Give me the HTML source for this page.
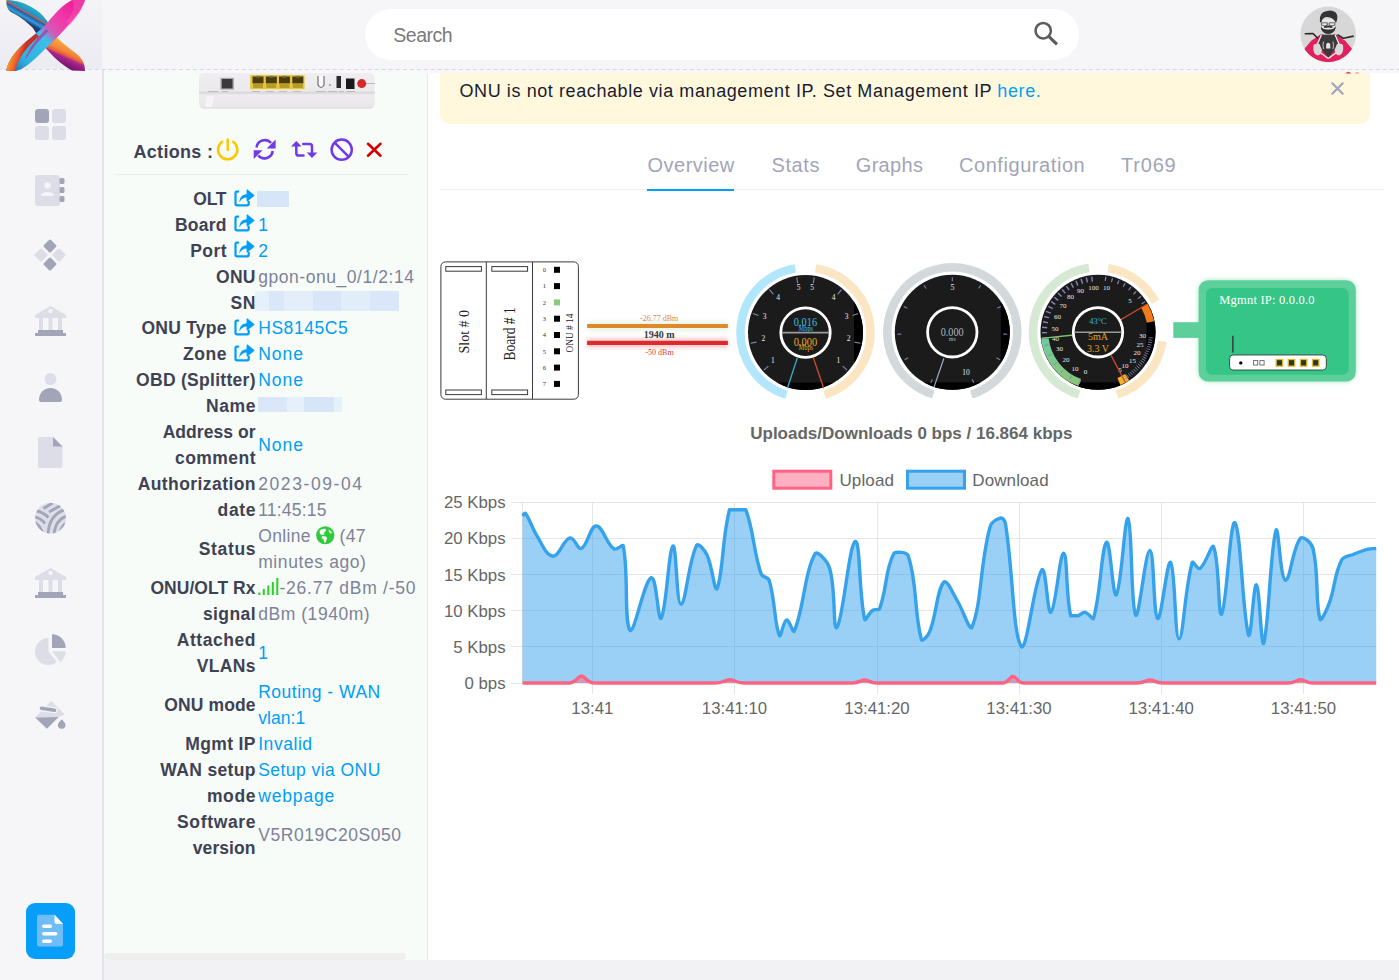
<!DOCTYPE html>
<html><head><meta charset="utf-8">
<style>
*{box-sizing:border-box;margin:0;padding:0}
html,body{width:1399px;height:980px;overflow:hidden;background:#f5f5f8;font-family:"Liberation Sans",sans-serif}
.abs{position:absolute}
#sidebar{left:0;top:0;width:102px;height:980px;background:#f6f6f9}
#sbborder{left:102px;top:70px;width:2px;height:910px;background:#e3e3ee}
#logo{left:0;top:0;width:102px;height:69px;background:linear-gradient(180deg,#f4f4f8 0%,#ebebf2 100%)}
#header{left:104px;top:0;width:1295px;height:70px;background:#f6f6f9;z-index:5}
#dash{left:0;top:69px;width:1399px;height:1px;z-index:6;background:repeating-linear-gradient(90deg,#d4d5e6 0 4.2px,transparent 4.2px 7px);background-position:3.8px 0}
#hstrip{left:104px;top:70px;width:1295px;height:3px;z-index:5;background:#f8f8fb}
#search{left:365px;top:9px;width:714px;height:51px;border-radius:26px;background:#fff;z-index:7}
#panel{left:104px;top:70px;width:323px;height:890px;background:#f7fcf8}
#panelb{left:427px;top:70px;width:1.5px;height:890px;background:#e6e8e8}
#content{left:428px;top:70px;width:971px;height:890px;background:#fff}
#footer{left:104px;top:960px;width:1295px;height:20px;background:#f2f2f5}
#thumb{left:104px;top:953px;width:302px;height:7px;border-radius:4px;background:#efefef}
.lbl{position:absolute;right:1144px;font-weight:700;color:#3f4254;font-size:17.5px;letter-spacing:0.45px;text-align:right;white-space:nowrap;line-height:26px}
.val{position:absolute;left:259px;color:#7e8299;font-size:17.5px;letter-spacing:0.6px;white-space:nowrap;line-height:26px}
.blue{color:#009ef7}
.tab{position:absolute;top:152px;font-size:20px;color:#a1a5b7;letter-spacing:0.3px;line-height:26px}
</style></head><body>
<div id="sidebar" class="abs"></div>
<div id="logo" class="abs" style="z-index:7"></div>
<svg class="abs" style="left:0;top:0;z-index:9" width="102" height="72" viewBox="0 0 102 72">
<defs>
<linearGradient id="lgOr" gradientUnits="userSpaceOnUse" x1="70" y1="44" x2="60" y2="66"><stop offset="0" stop-color="#f9ad3c"/><stop offset="0.35" stop-color="#f4873a"/><stop offset="0.5" stop-color="#e8603e"/><stop offset="0.6" stop-color="#a8268c"/><stop offset="1" stop-color="#6c0f68"/></linearGradient>
<linearGradient id="lgTeal" gradientUnits="userSpaceOnUse" x1="24" y1="2" x2="16" y2="16"><stop offset="0" stop-color="#1fb8cc"/><stop offset="0.42" stop-color="#2392c4"/><stop offset="0.5" stop-color="#d85a3a"/><stop offset="0.58" stop-color="#2c5aa8"/><stop offset="0.8" stop-color="#2ea0d8"/><stop offset="1" stop-color="#203a80"/></linearGradient>
<linearGradient id="lgR2" gradientUnits="userSpaceOnUse" x1="84" y1="2" x2="14" y2="70"><stop offset="0" stop-color="#ec1690"/><stop offset="0.3" stop-color="#f23aaa"/><stop offset="0.45" stop-color="#d25ab8"/><stop offset="0.55" stop-color="#3cbfea"/><stop offset="0.85" stop-color="#30b0e0"/><stop offset="1" stop-color="#2278b0"/></linearGradient>
<linearGradient id="lgBl" gradientUnits="userSpaceOnUse" x1="8" y1="60" x2="20" y2="64"><stop offset="0" stop-color="#f8a41e"/><stop offset="0.6" stop-color="#f0602a"/><stop offset="1" stop-color="#c8302a"/></linearGradient>
<clipPath id="lcl"><rect x="0" y="0" width="50" height="40"/></clipPath>
</defs>
<path d="M6.5,0 C15,0 28,3 40,13 C48,20 52,30 57,37.5 C63,44 72,50 78,55 C83,60 85,64 85,71 L72,70.5 C62,65 52,56 44,46 C40,40 37,34 33,28 C27,22 18,15 12,12.5 C8,10.5 6.5,6 6.5,3 Z" fill="url(#lgOr)"/>
<path clip-path="url(#lcl)" d="M6.5,0 C15,0 28,3 40,13 C48,20 52,30 57,37.5 L44,46 C40,40 37,34 33,28 C27,22 18,15 12,12.5 C8,10.5 6.5,6 6.5,3 Z" fill="url(#lgTeal)"/>
<path d="M85,0 L72,0 C64,4 56,12 48,22 C42,29 36,33 28,40 C18,48 9,58 6,71 L16,71 C24,69 32,62 40,54 C48,46 58,37 66,28 C74,19 82,10 85,0 Z" fill="url(#lgR2)"/>
<path d="M6,71 C9,58 18,48 28,40 L36,33.5 L39,36.5 C31,43 23,52 18.5,61 L14.5,71 Z" fill="url(#lgBl)"/>
<path d="M39,36.5 L46,29 L48.5,31 C41,38.5 33,47 27,57 L24.5,60 C28,51 33,43 39,36.5 Z" fill="#a544a8" opacity="0.85"/>
<path d="M72,0 C78,0 83,0 85,0 C82,10 76,18 70,25 L66,22 C72,15 76,8 72,0 Z" fill="#f45ab8" opacity="0.5"/>
</svg>
<div id="sbborder" class="abs"></div>

<!-- sidebar icons -->
<svg class="abs" style="left:0;top:100px" width="102" height="640" viewBox="0 100 102 640">
<g>
<rect x="35" y="109" width="14" height="14" rx="3" fill="#a1a5b7"/>
<rect x="52" y="109" width="14" height="14" rx="3" fill="#dcdde6"/>
<rect x="35" y="126" width="14" height="14" rx="3" fill="#dcdde6"/>
<rect x="52" y="126" width="14" height="14" rx="3" fill="#dcdde6"/>
</g>
<g>
<rect x="35" y="175" width="25" height="31" rx="3" fill="#dcdde6"/>
<rect x="59.5" y="178" width="5" height="6" rx="1.5" fill="#a1a5b7"/>
<rect x="59.5" y="187" width="5" height="6" rx="1.5" fill="#a1a5b7"/>
<rect x="59.5" y="196" width="5" height="6" rx="1.5" fill="#a1a5b7"/>
<circle cx="47.5" cy="185.5" r="3.2" fill="#f5f5f9"/>
<path d="M41,196 C41,190.5 54,190.5 54,196 Z" fill="#f5f5f9"/>
</g>
<g>
<rect x="45" y="241" width="10" height="10" rx="1.5" transform="rotate(45 50 246)" fill="#a1a5b7"/>
<rect x="45" y="259" width="10" height="10" rx="1.5" transform="rotate(45 50 264)" fill="#a1a5b7"/>
<rect x="36" y="250" width="10" height="10" rx="1.5" transform="rotate(45 41 255)" fill="#dcdde6"/>
<rect x="54" y="250" width="10" height="10" rx="1.5" transform="rotate(45 59 255)" fill="#dcdde6"/>
</g>
<g id="bank">
<path d="M35,315 L50.5,306 L66,315 L66,318 L35,318 Z" fill="#dcdde6"/>
<circle cx="50.5" cy="311" r="2.2" fill="#f5f5f9"/>
<rect x="39" y="318" width="4" height="13" fill="#dcdde6"/>
<rect x="48.5" y="318" width="4" height="13" fill="#dcdde6"/>
<rect x="58" y="318" width="4" height="13" fill="#dcdde6"/>
<path d="M38,330 L63,330 L63,333 L66,333 L66,336 L35,336 L35,333 L38,333 Z" fill="#a1a5b7"/>
</g>
<g>
<circle cx="50.5" cy="379" r="6" fill="#dcdde6"/>
<path d="M39,400 C39,384 62,384 62,400 Q62,402 60,402 L41,402 Q39,402 39,400 Z" fill="#a1a5b7"/>
</g>
<g>
<path d="M40,437 L53,437 L62.5,446.5 L62.5,466 Q62.5,468 60.5,468 L40,468 Q38,468 38,466 L38,439 Q38,437 40,437 Z" fill="#dcdde6"/>
<path d="M53,437 L62.5,446.5 L53,446.5 Z" fill="#a1a5b7"/>
</g>
<g>
<clipPath id="yarnc"><circle cx="50.5" cy="518.2" r="15.4"/></clipPath>
<circle cx="50.5" cy="518.2" r="15.4" fill="#dcdde6"/>
<g clip-path="url(#yarnc)" stroke="#a1a5b7" stroke-width="2.8" fill="none">
<path d="M48,535 Q48.5,514 67,509"/>
<path d="M54,535 Q55,519 68,515.5"/>
<path d="M59.5,535 Q61,525 68,522"/>
<path d="M35,510.5 Q43,512 48.5,517.5"/>
<path d="M33.5,516.5 Q41,518 45,523.5"/>
<path d="M34,522 Q40,525 42.5,533"/>
<path d="M43.5,508.5 L52.5,503"/>
<path d="M49,512 L60.5,505.5"/>
</g>
</g>
<use href="#bank" transform="translate(0,262)"/>
<g>
<path d="M48.5,638 A13.5,13.5 0 1 0 56.8,662.1 L48.5,651.5 Z" fill="#dcdde6"/>
<path d="M52,634.3 A13.6,13.6 0 0 1 65.6,647.9 L52,647.9 Z" fill="#a1a5b7"/>
<path d="M52,651.2 L65.6,651.2 A13.6,13.6 0 0 1 60.4,661.9 Z" fill="#dcdde6"/>
</g>
<g>
<path d="M51.2,701.1 L64.9,714.6 L58.7,717.1 L35.1,717.4 Z" fill="#dcdde6"/>
<path d="M35.1,717.4 L58.7,717.1 L46.9,728.7 Z" fill="#a1a5b7"/>
<path d="M41.5,708.2 L54.5,710.3" stroke="#f5f5f9" stroke-width="6" stroke-linecap="round"/>
<path d="M41.5,708.2 L54.5,710.3" stroke="#a1a5b7" stroke-width="3.6" stroke-linecap="round"/>
<path d="M61.7,719.6 C63.5,721.5 65.5,723 65.5,725 A3.8,3.8 0 0 1 57.9,725 C57.9,723 59.9,721.5 61.7,719.6 Z" fill="#a1a5b7"/>
</g>
</svg>

<!-- bottom blue button -->
<div class="abs" style="left:26px;top:903px;width:49px;height:56px;border-radius:9px;background:#069ef9"></div>
<svg class="abs" style="left:26px;top:903px" width="49" height="56" viewBox="0 0 49 56">
<path d="M27,12 L3,12 Z" />
<rect x="2" y="2" width="0" height="0"/>
<path d="M28.5,11.7 L13,11.7 Q11,11.7 11,13.7 L11,41.5 Q11,43.5 13,43.5 L35,43.5 Q37,43.5 37,41.5 L37,20.7 Z" fill="#6fbdf7"/>
<path d="M28.5,11.7 L37,20.7 L30,20.7 Q28.5,20.7 28.5,19 Z" fill="#fff"/>
<rect x="16" y="21.5" width="10" height="3.5" rx="1.75" fill="#fff"/>
<rect x="16" y="29" width="15.5" height="3.5" rx="1.75" fill="#fff"/>
<rect x="16" y="36.5" width="10" height="3.5" rx="1.75" fill="#fff"/>
</svg>

<div id="panel" class="abs"></div>
<div id="panelb" class="abs"></div>
<div id="content" class="abs"></div>
<div id="footer" class="abs"></div>
<div id="thumb" class="abs"></div>


<svg class="abs" style="left:196px;top:70px" width="184" height="42" viewBox="196 70 184 42">
<defs><linearGradient id="rb" x1="0" y1="0" x2="0" y2="1"><stop offset="0" stop-color="#f0eef0"/><stop offset="0.5" stop-color="#ebe9eb"/><stop offset="0.56" stop-color="#d9d6d8"/><stop offset="0.62" stop-color="#eeecee"/><stop offset="0.95" stop-color="#e9e7e9"/><stop offset="1" stop-color="#d8d5d7"/></linearGradient></defs>
<path d="M204,72.8 L369,72.8 Q374.8,72.8 374.8,79 L374.8,103 Q374.8,108.5 369,108.5 L205,108.5 Q199,108.5 199,103 L199,79 Q199,72.8 204,72.8 Z" fill="url(#rb)"/>
<rect x="220.4" y="77.8" width="13.5" height="11.8" fill="#a8a8a8"/>
<rect x="221.8" y="79" width="10.7" height="9.4" fill="#3a3a3a"/>
<rect x="250.2" y="75" width="54.4" height="14.2" fill="#e6c73c"/>
<g fill="#4a3c10"><rect x="252.5" y="76.5" width="11" height="7"/><rect x="265.8" y="76.5" width="11" height="7"/><rect x="279" y="76.5" width="11" height="7"/><rect x="292.3" y="76.5" width="11" height="7"/></g>
<g fill="#b89a28"><rect x="253" y="83.5" width="10" height="4.5"/><rect x="266.3" y="83.5" width="10" height="4.5"/><rect x="279.5" y="83.5" width="10" height="4.5"/><rect x="292.8" y="83.5" width="10" height="4.5"/></g>
<g fill="#7b6a3a"><rect x="256" y="75.8" width="4" height="2"/><rect x="269.3" y="75.8" width="4" height="2"/><rect x="282.5" y="75.8" width="4" height="2"/><rect x="295.8" y="75.8" width="4" height="2"/></g>
<path d="M318,76 L318,85 Q321,90 324,85 L324,76" stroke="#666" stroke-width="1.1" fill="#fafafa"/>
<circle cx="330" cy="85" r="0.7" fill="#444"/>
<rect x="336.5" y="76" width="4.5" height="12" fill="#2a2a2a"/>
<rect x="346" y="78.5" width="8.5" height="10.5" fill="#1a1a1a"/>
<path d="M362,83.5 L374.8,83.5" stroke="#bbb" stroke-width="1"/>
<circle cx="361.7" cy="83.6" r="4.5" fill="#d42a2a"/>
<g fill="#bdbdbd"><rect x="252" y="91" width="8" height="1"/><rect x="266" y="91" width="8" height="1"/><rect x="279" y="91" width="8" height="1"/><rect x="293" y="91" width="8" height="1"/><rect x="316" y="91" width="10" height="1"/><rect x="328" y="91" width="9" height="1"/><rect x="339" y="91" width="5" height="1"/><rect x="346" y="91" width="9" height="1"/><rect x="208" y="91" width="10" height="1"/><rect x="222" y="91" width="6" height="1"/></g>
<path d="M207,96 L205,107 L212,107 L214,96 Z" fill="#f6f5f6"/>
</svg>
<div class="abs" style="left:133.5px;top:140px;font-size:18px;font-weight:700;color:#3f4254;line-height:24px;letter-spacing:0.3px">Actions :</div>
<svg class="abs" style="left:210px;top:130px" width="180" height="40" viewBox="210 130 180 40">
<path d="M222.2,141.8 A9.6,9.6 0 1 0 233.2,141.8" stroke="#ffc700" stroke-width="2.5" fill="none" stroke-linecap="round"/>
<path d="M227.7,139.6 L227.7,150" stroke="#ffc700" stroke-width="2.5" stroke-linecap="round"/>
<path d="M256.5,147.5 A8.3,8.3 0 0 1 271,143" stroke="#7239ea" stroke-width="2.6" fill="none"/>
<path d="M275.6,139.6 L275.6,148.5 L266.7,148.5 Z" fill="#7239ea"/>
<path d="M272.7,151 A8.3,8.3 0 0 1 258.2,155.5" stroke="#7239ea" stroke-width="2.6" fill="none"/>
<path d="M253.7,159 L253.7,150.2 L262.6,150.2 Z" fill="#7239ea"/>
<path d="M291,146.6 L296.3,141 L301.6,146.6 Z" fill="#7239ea"/>
<path d="M296.3,145 L296.3,153.2 Q296.3,155.6 298.7,155.6 L303.5,155.6" stroke="#7239ea" stroke-width="2.5" fill="none" stroke-linecap="round"/>
<path d="M303.2,144 L309.6,144 Q312,144 312,146.4 L312,154" stroke="#7239ea" stroke-width="2.5" fill="none" stroke-linecap="round"/>
<path d="M306.7,152.4 L312,158.1 L317.3,152.4 Z" fill="#7239ea"/>
<circle cx="341.7" cy="149.7" r="10.1" stroke="#7239ea" stroke-width="2.5" fill="none"/>
<path d="M334.6,142.6 L348.8,156.8" stroke="#7239ea" stroke-width="2.5"/>
<path d="M368,143.8 L380.5,155.7 M380.5,143.8 L368,155.7" stroke="#d40000" stroke-width="2.6" stroke-linecap="round"/>
</svg>
<div class="abs" style="left:115px;top:173.5px;width:294px;height:1px;background:#ebeeed"></div>

<!--PANEL-->
<div class="lbl" style="top:185.7px;right:1172.75px;letter-spacing:-0.25px">OLT</div>
<svg class="abs" style="left:234.3px;top:187.5px" width="21" height="19" viewBox="0 0 21 19"><path d="M4.2,3.6 H2.8 Q1.5,3.6 1.5,5 V15.8 Q1.5,17.3 3,17.3 H13.2 Q14.7,17.3 14.7,15.8 V13.6" stroke="#009ef7" stroke-width="2.2" fill="none" stroke-linecap="round"/><path d="M5.4,14.4 C5.4,9.4 8.4,6.4 12.6,6.2 V2 Q12.6,1 13.5,1.6 L20.2,6.9 Q20.8,7.4 20.2,7.9 L13.5,13.2 Q12.6,13.8 12.6,12.8 V9.6 C9.6,9.6 7.4,11 5.4,14.4 Z" fill="#009ef7"/></svg>
<div class="lbl" style="top:211.6px;right:1172.25px;letter-spacing:0.25px">Board</div>
<svg class="abs" style="left:234.3px;top:213.4px" width="21" height="19" viewBox="0 0 21 19"><path d="M4.2,3.6 H2.8 Q1.5,3.6 1.5,5 V15.8 Q1.5,17.3 3,17.3 H13.2 Q14.7,17.3 14.7,15.8 V13.6" stroke="#009ef7" stroke-width="2.2" fill="none" stroke-linecap="round"/><path d="M5.4,14.4 C5.4,9.4 8.4,6.4 12.6,6.2 V2 Q12.6,1 13.5,1.6 L20.2,6.9 Q20.8,7.4 20.2,7.9 L13.5,13.2 Q12.6,13.8 12.6,12.8 V9.6 C9.6,9.6 7.4,11 5.4,14.4 Z" fill="#009ef7"/></svg>
<div class="lbl" style="top:237.6px;right:1172.05px;letter-spacing:0.45px">Port</div>
<svg class="abs" style="left:234.3px;top:239.4px" width="21" height="19" viewBox="0 0 21 19"><path d="M4.2,3.6 H2.8 Q1.5,3.6 1.5,5 V15.8 Q1.5,17.3 3,17.3 H13.2 Q14.7,17.3 14.7,15.8 V13.6" stroke="#009ef7" stroke-width="2.2" fill="none" stroke-linecap="round"/><path d="M5.4,14.4 C5.4,9.4 8.4,6.4 12.6,6.2 V2 Q12.6,1 13.5,1.6 L20.2,6.9 Q20.8,7.4 20.2,7.9 L13.5,13.2 Q12.6,13.8 12.6,12.8 V9.6 C9.6,9.6 7.4,11 5.4,14.4 Z" fill="#009ef7"/></svg>
<div class="lbl" style="top:315.4px;right:1172.25px;letter-spacing:0.25px">ONU Type</div>
<svg class="abs" style="left:234.3px;top:317.2px" width="21" height="19" viewBox="0 0 21 19"><path d="M4.2,3.6 H2.8 Q1.5,3.6 1.5,5 V15.8 Q1.5,17.3 3,17.3 H13.2 Q14.7,17.3 14.7,15.8 V13.6" stroke="#009ef7" stroke-width="2.2" fill="none" stroke-linecap="round"/><path d="M5.4,14.4 C5.4,9.4 8.4,6.4 12.6,6.2 V2 Q12.6,1 13.5,1.6 L20.2,6.9 Q20.8,7.4 20.2,7.9 L13.5,13.2 Q12.6,13.8 12.6,12.8 V9.6 C9.6,9.6 7.4,11 5.4,14.4 Z" fill="#009ef7"/></svg>
<div class="lbl" style="top:341.4px;right:1171.95px;letter-spacing:0.55px">Zone</div>
<svg class="abs" style="left:234.3px;top:343.2px" width="21" height="19" viewBox="0 0 21 19"><path d="M4.2,3.6 H2.8 Q1.5,3.6 1.5,5 V15.8 Q1.5,17.3 3,17.3 H13.2 Q14.7,17.3 14.7,15.8 V13.6" stroke="#009ef7" stroke-width="2.2" fill="none" stroke-linecap="round"/><path d="M5.4,14.4 C5.4,9.4 8.4,6.4 12.6,6.2 V2 Q12.6,1 13.5,1.6 L20.2,6.9 Q20.8,7.4 20.2,7.9 L13.5,13.2 Q12.6,13.8 12.6,12.8 V9.6 C9.6,9.6 7.4,11 5.4,14.4 Z" fill="#009ef7"/></svg>
<div class="lbl" style="top:263.5px;right:1143.25px;letter-spacing:0.25px">ONU</div>
<div class="lbl" style="top:289.5px;right:1142.75px;letter-spacing:0.75px">SN</div>
<div class="lbl" style="top:367.4px;right:1143.21px;letter-spacing:0.29px">OBD (Splitter)</div>
<div class="lbl" style="top:393.3px;right:1142.85px;letter-spacing:0.65px">Name</div>
<div class="lbl" style="top:419.2px;right:1143.45px;letter-spacing:0.05px">Address or</div>
<div class="lbl" style="top:445.2px;right:1143.05px;letter-spacing:0.45px">comment</div>
<div class="lbl" style="top:471.1px;right:1143.08px;letter-spacing:0.42px">Authorization</div>
<div class="lbl" style="top:497.1px;right:1142.85px;letter-spacing:0.65px">date</div>
<div class="lbl" style="top:536.0px;right:1142.85px;letter-spacing:0.65px">Status</div>
<div class="lbl" style="top:575.0px;right:1143.45px;letter-spacing:0.05px">ONU/OLT Rx</div>
<div class="lbl" style="top:600.9px;right:1143.09px;letter-spacing:0.41px">signal</div>
<div class="lbl" style="top:626.8px;right:1142.95px;letter-spacing:0.55px">Attached</div>
<div class="lbl" style="top:652.8px;right:1143.18px;letter-spacing:0.32px">VLANs</div>
<div class="lbl" style="top:691.7px;right:1143.39px;letter-spacing:0.11px">ONU mode</div>
<div class="lbl" style="top:730.6px;right:1143.15px;letter-spacing:0.35px">Mgmt IP</div>
<div class="lbl" style="top:756.6px;right:1143.15px;letter-spacing:0.35px">WAN setup</div>
<div class="lbl" style="top:782.5px;right:1142.85px;letter-spacing:0.65px">mode</div>
<div class="lbl" style="top:808.5px;right:1142.85px;letter-spacing:0.65px">Software</div>
<div class="lbl" style="top:834.5px;right:1143.42px;letter-spacing:0.08px">version</div>
<div class="val blue" style="top:211.6px;left:258.2px;letter-spacing:0.35px">1</div>
<div class="val blue" style="top:237.6px;left:258.2px;letter-spacing:0.35px">2</div>
<div class="val " style="top:263.5px;left:258.2px;letter-spacing:0.55px">gpon-onu_0/1/2:14</div>
<div class="val blue" style="top:315.4px;left:258.2px;letter-spacing:0.55px">HS8145C5</div>
<div class="val blue" style="top:341.4px;left:258.2px;letter-spacing:0.95px">None</div>
<div class="val blue" style="top:367.4px;left:258.2px;letter-spacing:0.95px">None</div>
<div class="val blue" style="top:432.2px;left:258.2px;letter-spacing:0.95px">None</div>
<div class="val " style="top:471.1px;left:258.2px;letter-spacing:1.6px">2023-09-04</div>
<div class="val " style="top:497.1px;left:258.2px;letter-spacing:0.2px">11:45:15</div>
<div class="val " style="top:523.0px;left:258.2px;letter-spacing:0.35px">Online</div>
<div class="val " style="top:523.0px;left:339.5px;letter-spacing:0.35px">(47</div>
<div class="val " style="top:549.0px;left:258.2px;letter-spacing:0.6px">minutes ago)</div>
<div class="val " style="top:575.0px;left:279.5px;letter-spacing:0.75px">-26.77 dBm /-50</div>
<div class="val " style="top:600.9px;left:258.2px;letter-spacing:0.55px">dBm (1940m)</div>
<div class="val blue" style="top:639.8px;left:258.2px;letter-spacing:0.35px">1</div>
<div class="val blue" style="top:678.8px;left:258.2px;letter-spacing:0.5px">Routing - WAN</div>
<div class="val blue" style="top:704.7px;left:258.2px;letter-spacing:0.05px">vlan:1</div>
<div class="val blue" style="top:730.6px;left:258.2px;letter-spacing:0.55px">Invalid</div>
<div class="val blue" style="top:756.6px;left:258.2px;letter-spacing:0.45px">Setup via ONU</div>
<div class="val blue" style="top:782.5px;left:258.2px;letter-spacing:0.85px">webpage</div>
<div class="val " style="top:821.5px;left:258.2px;letter-spacing:0.55px">V5R019C20S050</div>
<div class="abs" style="left:257px;top:190.7px;width:32px;height:16px;background:#d6e6f8"></div>
<div class="abs" style="left:255px;top:290.5px;width:144px;height:20.5px;background:linear-gradient(90deg,#e6f0fb 0 10%,#d9e7f8 10% 20%,#e3eefa 20% 40%,#d8e6f8 40% 60%,#e2edfa 60% 80%,#d9e7f8 80% 100%)"></div>
<div class="abs" style="left:257.5px;top:396.5px;width:84.5px;height:15.5px;background:linear-gradient(90deg,#d9e7f8 0 35%,#e6f0fb 35% 55%,#d6e5f8 55% 90%,#e6f0fb 90% 100%)"></div>
<svg class="abs" style="left:315.5px;top:525.5px" width="19" height="19" viewBox="0 0 19 19"><circle cx="9.25" cy="9.25" r="9.1" fill="#2fcb3c"/><path d="M3.5,5 C5,3 7.5,2.5 9.5,3 L10,5 L8,6.5 L8.5,8.5 L6,9 L4,8 Z M6,10 L10,10.5 L11,12.5 L9.5,16.5 L8.5,17 L7.5,13.5 L5.5,12 Z M12.5,3.5 C14,4 15.5,5.5 16,7 L14.5,7.5 L13,6 Z" fill="#f7fbf8"/></svg>
<svg class="abs" style="left:258px;top:577px" width="22" height="19" viewBox="0 0 22 19"><g stroke="#21d621" stroke-width="2"><path d="M1.3,18 V15.5"/><path d="M5.8,18 V12"/><path d="M10.3,18 V8.5"/><path d="M14.8,18 V5"/><path d="M19.3,18 V1"/></g></svg>
<!--/PANEL-->

<!--RIGHT-->
<div class="abs" style="left:440px;top:56px;width:929.5px;height:67.6px;border-radius:10px;background:#fff8dd"></div>
<div class="abs" style="left:459.5px;top:79px;font-size:18px;color:#181c32;letter-spacing:0.59px;line-height:24px;white-space:nowrap">ONU is not reachable via management IP. Set Management IP <span style="color:#009ef7">here.</span></div>
<svg class="abs" style="left:1326px;top:77px" width="24" height="24" viewBox="1326 77 24 24"><path d="M1332.3,83.3 L1342.7,93.7 M1342.7,83.3 L1332.3,93.7" stroke="#a1a5b7" stroke-width="2.2" stroke-linecap="round"/></svg>
<div class="tab" style="left:647.5px;letter-spacing:0.49px">Overview</div>
<div class="tab" style="left:771.5px;letter-spacing:0.6px">Stats</div>
<div class="tab" style="left:855.8px;letter-spacing:0.3px">Graphs</div>
<div class="tab" style="left:959px;letter-spacing:0.56px">Configuration</div>
<div class="tab" style="left:1121px;letter-spacing:0.8px">Tr069</div>
<div class="abs" style="left:440px;top:189px;width:943.5px;height:1px;background:#eff2f5"></div>
<div class="abs" style="left:647px;top:189px;width:87px;height:2px;background:#009ef7"></div>
<!--DIAGRAM-->
<svg class="abs" style="left:428px;top:240px" width="971" height="180" viewBox="428 240 971 180" font-family="Liberation Serif, serif">
<defs>
<filter id="glowG" x="-10%" y="-50%" width="120%" height="200%"><feGaussianBlur stdDeviation="2"/></filter>
<filter id="boxglow" x="-10%" y="-10%" width="120%" height="120%"><feGaussianBlur stdDeviation="2.5"/></filter>
<linearGradient id="gband" x1="0" y1="0" x2="0" y2="1"><stop offset="0" stop-color="#6fcb9f"/><stop offset="1" stop-color="#8cc47a"/></linearGradient>
</defs>
<g fill="none" stroke="#3a3a3a" stroke-width="1">
<rect x="440.9" y="261.9" width="137.5" height="137.3" rx="4.5"/>
<path d="M486.3,262 V399 M532.5,262 V399"/>
<rect x="445.8" y="266.6" width="35.6" height="4.6"/><rect x="445.8" y="390" width="35.6" height="4.6"/>
<rect x="491.8" y="266.6" width="35.8" height="4.6"/><rect x="491.8" y="390" width="35.8" height="4.6"/>
</g>
<text transform="translate(469.4,331.7) rotate(-90) scale(0.9,1)" text-anchor="middle" font-size="15.5" fill="#222">Slot # 0</text>
<text transform="translate(514.9,333.9) rotate(-90) scale(0.84,1)" text-anchor="middle" font-size="16" fill="#222">Board # 1</text>
<text transform="translate(572.9,333.1) rotate(-90) scale(0.89,1)" text-anchor="middle" font-size="10.5" fill="#222">ONU # 14</text>
<rect x="554" y="266.8" width="6" height="6" fill="#000"/>
<text x="544.4" y="272.1" text-anchor="middle" font-size="6.5" fill="#333">0</text>
<rect x="554" y="283.1" width="6" height="6" fill="#000"/>
<text x="544.4" y="288.4" text-anchor="middle" font-size="6.5" fill="#333">1</text>
<rect x="554" y="299.4" width="6" height="6" fill="#8dc87c"/>
<text x="544.4" y="304.7" text-anchor="middle" font-size="6.5" fill="#333">2</text>
<rect x="554" y="315.7" width="6" height="6" fill="#000"/>
<text x="544.4" y="321.0" text-anchor="middle" font-size="6.5" fill="#333">3</text>
<rect x="554" y="332.0" width="6" height="6" fill="#000"/>
<text x="544.4" y="337.3" text-anchor="middle" font-size="6.5" fill="#333">4</text>
<rect x="554" y="348.3" width="6" height="6" fill="#000"/>
<text x="544.4" y="353.6" text-anchor="middle" font-size="6.5" fill="#333">5</text>
<rect x="554" y="364.6" width="6" height="6" fill="#000"/>
<text x="544.4" y="369.9" text-anchor="middle" font-size="6.5" fill="#333">6</text>
<rect x="554" y="380.9" width="6" height="6" fill="#000"/>
<text x="544.4" y="386.2" text-anchor="middle" font-size="6.5" fill="#333">7</text>
<rect x="587" y="321.5" width="141" height="9" fill="#cfe8c8" opacity="0.5" filter="url(#glowG)"/>
<rect x="587" y="338.5" width="141" height="9" fill="#f5a0a0" opacity="0.6" filter="url(#glowG)"/>
<rect x="587.1" y="324" width="140.8" height="4" fill="#e0892b"/>
<rect x="587.1" y="340.8" width="140.8" height="4.2" fill="#dc2a2e"/>
<text x="659.2" y="321" text-anchor="middle" font-size="8" fill="#e8844a">-26.77 dBm</text>
<text x="659.2" y="337.7" text-anchor="middle" font-size="10" font-weight="700" fill="#3a3a3a">1940 m</text>
<text x="659.5" y="354.7" text-anchor="middle" font-size="8" fill="#e23c3c">-50 dBm</text>
<path d="M786.50,394.76 A65,65 0 0 1 795.33,268.40" stroke="#b2e6fa" stroke-width="8.5" fill="none" />
<path d="M815.67,268.40 A65,65 0 0 1 824.50,394.76" stroke="#fbe6c3" stroke-width="8.5" fill="none" />
<clipPath id="g1c"><circle cx="805.5" cy="332.6" r="57.5"/></clipPath>
<circle cx="805.5" cy="332.6" r="59" fill="#fff"/>
<circle cx="805.5" cy="332.6" r="57.5" fill="#1b1b1b"/>
<g clip-path="url(#g1c)"><rect x="745.5" y="382.6" width="120" height="20" fill="#000"/><rect x="854.0" y="272.6" width="20" height="120" fill="#000"/></g>
<path d="M768.34,366.06 L763.88,370.07 M756.42,342.14 L750.53,343.29 M758.52,315.50 L752.88,313.45 M773.36,294.30 L769.50,289.70 M797.68,283.22 L796.74,277.29" stroke="#8486b0" stroke-width="1.1"/>
<path d="M813.32,283.22 L814.26,277.29 M837.64,294.30 L841.50,289.70 M852.48,315.50 L858.12,313.45 M854.58,342.14 L860.47,343.29 M842.66,366.06 L847.12,370.07" stroke="#8486b0" stroke-width="1.1"/>
<text x="772.9" y="362.5" text-anchor="middle" font-size="7.5" fill="#e8e8e8">1</text>
<text x="763.3" y="341.2" text-anchor="middle" font-size="7.5" fill="#e8e8e8">2</text>
<text x="764.5" y="319" text-anchor="middle" font-size="7.5" fill="#e8e8e8">3</text>
<text x="778" y="299.8" text-anchor="middle" font-size="7.5" fill="#e8e8e8">4</text>
<text x="798.5" y="290" text-anchor="middle" font-size="7.5" fill="#e8e8e8">5</text>
<text x="812.2" y="290" text-anchor="middle" font-size="7.5" fill="#e8e8e8">5</text>
<text x="833.7" y="299.8" text-anchor="middle" font-size="7.5" fill="#e8e8e8">4</text>
<text x="846.6" y="319" text-anchor="middle" font-size="7.5" fill="#e8e8e8">3</text>
<text x="848.5" y="341.2" text-anchor="middle" font-size="7.5" fill="#e8e8e8">2</text>
<text x="838.3" y="362.5" text-anchor="middle" font-size="7.5" fill="#e8e8e8">1</text>
<path d="M797.3,357.9 L787.4,388.2" stroke="#2fb5d6" stroke-width="1.3"/>
<path d="M813.4,357.9 L823.7,388.2" stroke="#d4502a" stroke-width="1.3"/>
<circle cx="805.5" cy="332.6" r="24.7" fill="#1b1b1b" stroke="#fff" stroke-width="2.8"/>
<path d="M782.0,332.6 H829.0" stroke="#9a9a9a" stroke-width="1.6"/>
<text transform="translate(805.5,326.3) scale(0.8,1)" text-anchor="middle" font-size="13" fill="#3cc0e2">0.016</text>
<text transform="translate(805.8,331) scale(0.85,1)" text-anchor="middle" font-size="7.5" fill="#3cc0e2">Mbps</text>
<text transform="translate(805.5,345.9) scale(0.8,1)" text-anchor="middle" font-size="13" fill="#eaa81e">0.000</text>
<text transform="translate(805.8,350.3) scale(0.85,1)" text-anchor="middle" font-size="7.5" fill="#eaa81e">Mbps</text>
<path d="M933.30,394.46 A65,65 0 1 1 971.30,394.46" stroke="#d3d8db" stroke-width="8.5" fill="none" />
<clipPath id="g2c"><circle cx="952.3" cy="332.3" r="57.5"/></clipPath>
<circle cx="952.3" cy="332.3" r="59" fill="#fff"/>
<circle cx="952.3" cy="332.3" r="57.5" fill="#1b1b1b"/>
<g clip-path="url(#g2c)"><rect x="892.3" y="382.3" width="120" height="20" fill="#000"/><rect x="1000.8" y="272.3" width="20" height="120" fill="#000"/></g>
<path d="M932.37,379.25 L930.81,382.93 M908.13,357.80 L904.67,359.80 M901.33,334.08 L897.33,334.22 M907.27,308.36 L903.74,306.48 M926.03,288.58 L923.97,285.16 M952.30,281.30 L952.30,277.30 M978.57,288.58 L980.63,285.16 M997.33,308.36 L1000.86,306.48 M1003.27,334.08 L1007.27,334.22 M996.47,357.80 L999.93,359.80 M972.23,379.25 L973.79,382.93" stroke="#7d7fa8" stroke-width="1.1"/>
<text x="952.5" y="290" text-anchor="middle" font-size="8" fill="#e8e8e8">5</text>
<text x="966" y="375" text-anchor="middle" font-size="7.5" fill="#e8e8e8">10</text>
<path d="M943.9,358.3 L933.9,387.4" stroke="#98b4bc" stroke-width="1.2"/>
<circle cx="952.3" cy="332.3" r="24.7" fill="#1b1b1b" stroke="#fff" stroke-width="2.8"/>
<text transform="translate(952.2,335.8) scale(0.82,1)" text-anchor="middle" font-size="12.5" fill="#aab6bd">0.000</text>
<text transform="translate(952.3,340.8) scale(0.85,1)" text-anchor="middle" font-size="7" fill="#aab6bd">ms</text>
<path d="M1079.00,394.46 A65,65 0 0 1 1088.95,267.93" stroke="#d5e9d3" stroke-width="8.5" fill="none" />
<path d="M1108.17,268.10 A65,65 0 0 1 1155.39,301.78" stroke="#fbe6c3" stroke-width="8.5" fill="none" />
<path d="M1162.37,341.35 A65,65 0 0 1 1117.00,394.46" stroke="#fbe6c3" stroke-width="8.5" fill="none" />
<clipPath id="g3c"><circle cx="1098" cy="332.3" r="57.5"/></clipPath>
<circle cx="1098" cy="332.3" r="59" fill="#fff"/>
<circle cx="1098" cy="332.3" r="57.5" fill="#1b1b1b"/>
<g clip-path="url(#g3c)"><rect x="1038" y="382.3" width="120" height="20" fill="#000"/><rect x="1146.5" y="272.3" width="20" height="120" fill="#000"/></g>
<path d="M1079.70,382.57 A53.5,53.5 0 0 1 1044.90,338.82" stroke="url(#gband)" stroke-width="7.5" fill="none" />
<path d="M1144.33,305.55 A53.5,53.5 0 0 1 1150.52,322.09" stroke="#f27c1c" stroke-width="7.5" fill="none" />
<path d="M1127.14,377.17 A53.5,53.5 0 0 1 1118.90,381.55" stroke="#f2b02c" stroke-width="7.5" fill="none" />
<path d="M1047.28,337.63 L1042.31,338.15 M1047.00,332.66 L1042.00,332.69 M1047.21,327.68 L1042.23,327.22 M1047.90,322.74 L1042.99,321.81 M1049.07,317.90 L1044.28,316.49 M1050.71,313.20 L1046.08,311.32 M1052.80,308.67 L1048.37,306.36 M1055.33,304.37 L1051.14,301.64 M1058.25,300.34 L1054.36,297.21 M1061.56,296.62 L1057.99,293.12 M1065.22,293.23 L1062.00,289.40 M1069.19,290.22 L1066.36,286.09 M1073.43,287.61 L1071.02,283.23 M1077.91,285.42 L1075.94,280.83 M1082.58,283.69 L1081.07,278.92 M1087.40,282.41 L1086.36,277.52 M1092.32,281.62 L1091.76,276.65" stroke="#8486b8" stroke-width="1.4"/>
<path d="M1080.56,380.22 L1079.19,383.98 M1071.58,375.92 L1069.51,379.35 M1063.61,369.96 L1060.91,372.92 M1056.95,362.56 L1053.73,364.94 M1051.85,354.01 L1048.23,355.72 M1048.51,344.64 L1044.63,345.61" stroke="#8486b8" stroke-width="1"/>
<path d="M1105.24,280.81 L1105.79,276.84 M1111.46,282.07 L1112.49,278.21 M1117.48,284.09 L1118.98,280.38 M1123.21,286.82 L1125.15,283.32 M1128.56,290.23 L1130.92,287.00 M1133.46,294.27 L1136.19,291.34 M1137.83,298.88 L1140.90,296.30 M1141.61,303.98 L1144.97,301.80" stroke="#8486b8" stroke-width="1.2"/>
<path d="M1148.72,337.63 L1152.70,338.05 M1148.44,339.84 L1152.40,340.43 M1148.06,342.03 L1151.99,342.79 M1147.59,344.21 L1151.48,345.14 M1147.02,346.36 L1150.87,347.46 M1146.36,348.48 L1150.16,349.75 M1145.61,350.58 L1149.35,352.01 M1144.77,352.64 L1148.44,354.23 M1143.84,354.66 L1147.43,356.41 M1142.82,356.64 L1146.33,358.54 M1141.72,358.57 L1145.14,360.63 M1140.53,360.45 L1143.86,362.66 M1139.26,362.28 L1142.50,364.63 M1137.91,364.05 L1141.04,366.54 M1136.49,365.76 L1139.51,368.38 M1134.99,367.41 L1137.90,370.16 M1133.43,368.99 L1136.21,371.86 M1131.79,370.50 L1134.44,373.49 M1130.10,371.93 L1132.61,375.04 M1128.34,373.30 L1130.72,376.51 M1126.52,374.58 L1128.76,377.90 M1124.65,375.78 L1126.74,379.20 M1122.73,376.91 L1124.66,380.40" stroke="#8e90c4" stroke-width="0.8"/>
<text x="1085.5" y="374" text-anchor="middle" font-size="7" fill="#e8e8e8">0</text>
<text x="1075" y="371" text-anchor="middle" font-size="7" fill="#e8e8e8">10</text>
<text x="1066" y="362" text-anchor="middle" font-size="7" fill="#e8e8e8">20</text>
<text x="1059.5" y="350.5" text-anchor="middle" font-size="7" fill="#e8e8e8">30</text>
<text x="1055.5" y="340.5" text-anchor="middle" font-size="7" fill="#e8e8e8">40</text>
<text x="1055" y="330.5" text-anchor="middle" font-size="7" fill="#e8e8e8">50</text>
<text x="1057.5" y="318.5" text-anchor="middle" font-size="7" fill="#e8e8e8">60</text>
<text x="1063" y="308" text-anchor="middle" font-size="7" fill="#e8e8e8">70</text>
<text x="1070.5" y="299" text-anchor="middle" font-size="7" fill="#e8e8e8">80</text>
<text x="1080.5" y="293" text-anchor="middle" font-size="7" fill="#e8e8e8">90</text>
<text x="1093.5" y="290.3" text-anchor="middle" font-size="7" fill="#e8e8e8">100</text>
<text x="1106.5" y="290.3" text-anchor="middle" font-size="7" fill="#e8e8e8">10</text>
<text x="1130" y="302.5" text-anchor="middle" font-size="7" fill="#e8e8e8">5</text>
<text x="1142.5" y="337.5" text-anchor="middle" font-size="7" fill="#e8e8e8">30</text>
<text x="1140" y="346.5" text-anchor="middle" font-size="7" fill="#e8e8e8">25</text>
<text x="1137" y="354.5" text-anchor="middle" font-size="7" fill="#e8e8e8">20</text>
<text x="1132.5" y="362.5" text-anchor="middle" font-size="7" fill="#e8e8e8">15</text>
<text x="1125" y="367.5" text-anchor="middle" font-size="7" fill="#e8e8e8">10</text>
<text x="1120" y="371.5" text-anchor="middle" font-size="7" fill="#e8e8e8">5</text>
<path d="M1041.4,338.4 L1073.6,335" stroke="#7cc46e" stroke-width="1.3"/>
<path d="M1120.3,320 L1147.8,303.7" stroke="#d84a26" stroke-width="1.3"/>
<path d="M1111,355.3 L1125.6,382.8" stroke="#d84a26" stroke-width="1.3"/>
<circle cx="1098" cy="332.3" r="24.7" fill="#1b1b1b" stroke="#fff" stroke-width="2.8"/>
<path d="M1074.5,332.3 H1121.5" stroke="#9a9a9a" stroke-width="1.6"/>
<text x="1098" y="323.5" text-anchor="middle" font-size="8.5" fill="#34b8d8">43°C</text>
<text x="1098" y="339.7" text-anchor="middle" font-size="10" fill="#e5a322">5mA</text>
<text x="1098" y="351.5" text-anchor="middle" font-size="10" fill="#e5a322">3.3 V</text>
<rect x="1198.6" y="280.3" width="157.2" height="101.2" rx="10" fill="#9fe3c2" filter="url(#boxglow)"/>
<rect x="1173.3" y="322.2" width="27" height="15.7" fill="#5dcf9b"/>
<rect x="1198.6" y="280.3" width="157.2" height="101.2" rx="9.5" fill="#5dcf9b"/>
<rect x="1206" y="287.9" width="142.7" height="86.9" rx="6" fill="#35c687"/>
<text x="1219.3" y="303.6" font-size="12.5" fill="#fff" letter-spacing="0.2">Mgmnt IP: 0.0.0.0</text>
<path d="M1232.9,335.8 V352.6" stroke="#333" stroke-width="1.4"/>
<rect x="1229.6" y="355" width="96.7" height="15" rx="3.5" fill="#fff" stroke="#2a2a2a" stroke-width="0.8"/>
<circle cx="1240.8" cy="362.9" r="1.7" fill="#000"/>
<rect x="1253.6" y="360.6" width="4.2" height="4.4" fill="#fff" stroke="#555" stroke-width="0.8"/><rect x="1259.9" y="360.6" width="4.2" height="4.4" fill="#fff" stroke="#555" stroke-width="0.8"/>
<rect x="1276.2" y="359.5" width="6.4" height="6.6" fill="#1f3a30" stroke="#e6b628" stroke-width="1.3"/>
<rect x="1288.3" y="359.5" width="6.4" height="6.6" fill="#1f3a30" stroke="#e6b628" stroke-width="1.3"/>
<rect x="1300.4" y="359.5" width="6.4" height="6.6" fill="#1f3a30" stroke="#e6b628" stroke-width="1.3"/>
<rect x="1312.5" y="359.5" width="6.4" height="6.6" fill="#1f3a30" stroke="#e6b628" stroke-width="1.3"/>
</svg>
<!--/DIAGRAM-->
<!--CHART-->
<svg class="abs" style="left:428px;top:415px" width="971" height="310" viewBox="428 415 971 310" font-family="Liberation Sans, sans-serif">
<text x="911.3" y="438.6" text-anchor="middle" font-size="17" font-weight="700" fill="#666">Uploads/Downloads 0 bps / 16.864 kbps</text>
<rect x="773.8" y="471.2" width="57" height="17" fill="#ffb1c1" stroke="#ff6384" stroke-width="3"/>
<text x="839.4" y="485.5" font-size="17" fill="#666" letter-spacing="0.15">Upload</text>
<rect x="907.5" y="471.2" width="57" height="17" fill="#9ad0f5" stroke="#36a2eb" stroke-width="3"/>
<text x="972.3" y="485.5" font-size="17" fill="#666" letter-spacing="0.1">Download</text>
<path d="M510.6,683.0 H1376.2 M510.6,646.8 H1376.2 M510.6,610.7 H1376.2 M510.6,574.5 H1376.2 M510.6,538.4 H1376.2 M510.6,502.2 H1376.2 M592.3,502.2 V694.4 M734.5,502.2 V694.4 M877,502.2 V694.4 M1019,502.2 V694.4 M1161.2,502.2 V694.4 M1303.5,502.2 V694.4 M522.5,502.2 V683.0" stroke="#e5e5e5" stroke-width="1" fill="none" shape-rendering="crispEdges"/>
<text x="505.6" y="689.0" text-anchor="end" font-size="16.8" fill="#666">0 bps</text>
<text x="505.6" y="652.8" text-anchor="end" font-size="16.8" fill="#666">5 Kbps</text>
<text x="505.6" y="616.7" text-anchor="end" font-size="16.8" fill="#666">10 Kbps</text>
<text x="505.6" y="580.5" text-anchor="end" font-size="16.8" fill="#666">15 Kbps</text>
<text x="505.6" y="544.4" text-anchor="end" font-size="16.8" fill="#666">20 Kbps</text>
<text x="505.6" y="508.2" text-anchor="end" font-size="16.8" fill="#666">25 Kbps</text>
<text x="592.3" y="714" text-anchor="middle" font-size="16.8" fill="#666">13:41</text>
<text x="734.5" y="714" text-anchor="middle" font-size="16.8" fill="#666">13:41:10</text>
<text x="877" y="714" text-anchor="middle" font-size="16.8" fill="#666">13:41:20</text>
<text x="1019" y="714" text-anchor="middle" font-size="16.8" fill="#666">13:41:30</text>
<text x="1161.2" y="714" text-anchor="middle" font-size="16.8" fill="#666">13:41:40</text>
<text x="1303.5" y="714" text-anchor="middle" font-size="16.8" fill="#666">13:41:50</text>
<path d="M522.50,516.00 C523.70,515.00 524.72,512.44 525.50,513.50 C530.28,519.96 531.27,526.77 536.40,534.80 C542.19,543.85 545.84,555.56 552.80,556.20 C559.28,556.80 562.95,539.80 570.00,537.90 C574.35,536.72 577.48,550.00 581.30,548.50 C587.96,545.48 589.90,525.90 596.20,526.00 C602.98,526.10 605.92,543.14 614.00,549.00 C616.72,550.50 622.53,544.10 623.20,545.60 C629.05,574.91 623.56,623.00 630.30,630.70 C634.80,632.20 644.22,580.51 651.30,577.70 C656.50,576.20 657.85,620.00 661.00,618.50 C666.53,610.43 668.55,549.18 673.00,546.00 C676.55,544.50 676.34,604.40 681.00,604.20 C685.86,604.00 688.37,560.96 696.80,545.00 C698.77,543.50 704.69,549.94 707.00,555.00 C712.69,567.50 714.05,590.40 716.80,588.90 C723.05,576.32 721.94,538.47 729.50,509.70 C730.26,509.70 734.36,509.70 737.60,509.70 C740.88,509.70 744.76,509.70 745.80,509.70 C754.12,532.42 752.94,549.25 761.00,573.60 C762.34,577.65 768.09,576.64 769.30,580.70 C775.49,601.52 774.22,623.84 779.50,635.80 C781.14,637.30 783.31,620.91 786.60,619.90 C789.19,619.11 792.53,632.80 794.20,631.30 C804.05,608.48 804.12,573.16 815.40,553.20 C818.32,551.70 827.47,560.75 829.70,568.50 C836.03,590.55 832.68,629.20 836.80,627.70 C842.88,621.26 849.28,543.23 855.20,541.50 C860.48,540.00 858.77,595.64 864.80,619.50 C865.73,621.00 868.90,613.08 872.60,610.30 C874.86,608.60 878.72,610.92 879.70,608.30 C887.28,588.08 884.89,569.93 894.00,553.20 C896.33,551.70 906.70,551.70 908.30,555.80 C917.70,585.42 913.97,613.18 921.50,639.90 C922.53,641.40 928.05,635.94 929.70,631.70 C937.13,612.66 936.55,590.17 944.20,581.70 C947.63,580.20 952.61,592.98 957.40,601.00 C963.61,611.38 968.72,629.20 971.70,627.70 C981.76,604.86 979.71,565.53 990.00,527.00 C991.43,521.65 996.94,518.79 1001.00,518.00 C1003.14,517.59 1005.03,521.06 1005.50,524.00 C1013.31,572.66 1012.81,635.94 1021.70,647.00 C1027.45,648.50 1034.54,578.48 1042.10,569.50 C1046.22,568.00 1047.29,613.80 1050.90,612.30 C1055.89,608.52 1059.72,552.51 1063.60,553.20 C1067.64,553.91 1065.57,593.33 1070.70,615.80 C1071.29,615.80 1075.17,615.80 1077.90,615.80 C1080.97,615.06 1082.47,611.82 1085.20,612.30 C1088.67,612.90 1092.40,620.00 1093.40,618.50 C1100.96,593.79 1101.21,547.85 1106.60,542.30 C1110.33,540.80 1112.70,596.50 1116.20,595.00 C1121.26,589.37 1124.52,517.00 1128.00,518.50 C1132.36,523.04 1130.60,607.80 1135.80,615.40 C1139.36,616.90 1145.59,549.89 1149.90,550.50 C1154.35,551.13 1153.23,615.94 1157.70,618.50 C1161.47,620.00 1166.85,560.80 1170.50,562.30 C1175.37,566.97 1174.66,638.90 1179.00,638.90 C1183.38,638.90 1184.88,587.31 1192.30,562.30 C1193.24,560.80 1197.58,570.00 1199.90,568.50 C1206.02,563.89 1211.03,544.90 1213.40,546.40 C1219.67,559.72 1217.86,615.90 1221.50,614.40 C1226.42,608.92 1229.91,521.10 1234.80,522.60 C1240.79,527.23 1242.74,618.25 1248.70,635.40 C1251.38,636.90 1253.64,583.30 1256.40,584.80 C1259.60,586.56 1260.90,645.10 1263.60,643.60 C1268.82,629.07 1270.18,547.18 1276.20,529.70 C1278.90,528.20 1280.18,578.55 1285.40,580.30 C1289.98,581.80 1292.58,547.25 1300.70,537.90 C1303.62,536.40 1311.56,542.45 1313.00,548.50 C1319.32,575.09 1314.93,602.17 1320.10,619.50 C1321.45,621.00 1326.77,610.20 1329.30,603.20 C1335.33,586.52 1334.01,575.29 1341.50,560.30 C1343.81,555.69 1348.75,556.33 1353.80,554.20 C1359.35,551.85 1362.20,550.58 1368.00,549.10 C1371.16,548.30 1372.92,548.74 1376.20,548.50 L1376.2,683.0 L522.5,683.0 Z" fill="rgba(54,162,235,0.5)"/>
<path d="M522.50,516.00 C523.70,515.00 524.72,512.44 525.50,513.50 C530.28,519.96 531.27,526.77 536.40,534.80 C542.19,543.85 545.84,555.56 552.80,556.20 C559.28,556.80 562.95,539.80 570.00,537.90 C574.35,536.72 577.48,550.00 581.30,548.50 C587.96,545.48 589.90,525.90 596.20,526.00 C602.98,526.10 605.92,543.14 614.00,549.00 C616.72,550.50 622.53,544.10 623.20,545.60 C629.05,574.91 623.56,623.00 630.30,630.70 C634.80,632.20 644.22,580.51 651.30,577.70 C656.50,576.20 657.85,620.00 661.00,618.50 C666.53,610.43 668.55,549.18 673.00,546.00 C676.55,544.50 676.34,604.40 681.00,604.20 C685.86,604.00 688.37,560.96 696.80,545.00 C698.77,543.50 704.69,549.94 707.00,555.00 C712.69,567.50 714.05,590.40 716.80,588.90 C723.05,576.32 721.94,538.47 729.50,509.70 C730.26,509.70 734.36,509.70 737.60,509.70 C740.88,509.70 744.76,509.70 745.80,509.70 C754.12,532.42 752.94,549.25 761.00,573.60 C762.34,577.65 768.09,576.64 769.30,580.70 C775.49,601.52 774.22,623.84 779.50,635.80 C781.14,637.30 783.31,620.91 786.60,619.90 C789.19,619.11 792.53,632.80 794.20,631.30 C804.05,608.48 804.12,573.16 815.40,553.20 C818.32,551.70 827.47,560.75 829.70,568.50 C836.03,590.55 832.68,629.20 836.80,627.70 C842.88,621.26 849.28,543.23 855.20,541.50 C860.48,540.00 858.77,595.64 864.80,619.50 C865.73,621.00 868.90,613.08 872.60,610.30 C874.86,608.60 878.72,610.92 879.70,608.30 C887.28,588.08 884.89,569.93 894.00,553.20 C896.33,551.70 906.70,551.70 908.30,555.80 C917.70,585.42 913.97,613.18 921.50,639.90 C922.53,641.40 928.05,635.94 929.70,631.70 C937.13,612.66 936.55,590.17 944.20,581.70 C947.63,580.20 952.61,592.98 957.40,601.00 C963.61,611.38 968.72,629.20 971.70,627.70 C981.76,604.86 979.71,565.53 990.00,527.00 C991.43,521.65 996.94,518.79 1001.00,518.00 C1003.14,517.59 1005.03,521.06 1005.50,524.00 C1013.31,572.66 1012.81,635.94 1021.70,647.00 C1027.45,648.50 1034.54,578.48 1042.10,569.50 C1046.22,568.00 1047.29,613.80 1050.90,612.30 C1055.89,608.52 1059.72,552.51 1063.60,553.20 C1067.64,553.91 1065.57,593.33 1070.70,615.80 C1071.29,615.80 1075.17,615.80 1077.90,615.80 C1080.97,615.06 1082.47,611.82 1085.20,612.30 C1088.67,612.90 1092.40,620.00 1093.40,618.50 C1100.96,593.79 1101.21,547.85 1106.60,542.30 C1110.33,540.80 1112.70,596.50 1116.20,595.00 C1121.26,589.37 1124.52,517.00 1128.00,518.50 C1132.36,523.04 1130.60,607.80 1135.80,615.40 C1139.36,616.90 1145.59,549.89 1149.90,550.50 C1154.35,551.13 1153.23,615.94 1157.70,618.50 C1161.47,620.00 1166.85,560.80 1170.50,562.30 C1175.37,566.97 1174.66,638.90 1179.00,638.90 C1183.38,638.90 1184.88,587.31 1192.30,562.30 C1193.24,560.80 1197.58,570.00 1199.90,568.50 C1206.02,563.89 1211.03,544.90 1213.40,546.40 C1219.67,559.72 1217.86,615.90 1221.50,614.40 C1226.42,608.92 1229.91,521.10 1234.80,522.60 C1240.79,527.23 1242.74,618.25 1248.70,635.40 C1251.38,636.90 1253.64,583.30 1256.40,584.80 C1259.60,586.56 1260.90,645.10 1263.60,643.60 C1268.82,629.07 1270.18,547.18 1276.20,529.70 C1278.90,528.20 1280.18,578.55 1285.40,580.30 C1289.98,581.80 1292.58,547.25 1300.70,537.90 C1303.62,536.40 1311.56,542.45 1313.00,548.50 C1319.32,575.09 1314.93,602.17 1320.10,619.50 C1321.45,621.00 1326.77,610.20 1329.30,603.20 C1335.33,586.52 1334.01,575.29 1341.50,560.30 C1343.81,555.69 1348.75,556.33 1353.80,554.20 C1359.35,551.85 1362.20,550.58 1368.00,549.10 C1371.16,548.30 1372.92,548.74 1376.20,548.50" stroke="#36a2eb" stroke-width="3.4" fill="none" stroke-linejoin="round"/>
<path d="M522.5,683.0 L569.0,683.0 C575.9,683.0 577.8,676.0 581.5,676.0 C585.2,676.0 587.1,683.0 594.0,683.0 L715.3,683.0 C723.3,683.0 725.4,679.7 729.8,679.7 C734.1,679.7 736.3,683.0 744.3,683.0 L852.5,683.0 C859.1,683.0 860.9,680.0 864.5,680.0 C868.1,680.0 869.9,683.0 876.5,683.0 L1002.5,683.0 C1008.3,683.0 1009.9,676.2 1013.0,676.2 C1016.1,676.2 1017.7,683.0 1023.5,683.0 L1137.0,683.0 C1144.2,683.0 1146.1,680.0 1150.0,680.0 C1153.9,680.0 1155.8,683.0 1163.0,683.0 L1287.5,683.0 C1294.7,683.0 1296.6,679.7 1300.5,679.7 C1304.4,679.7 1306.3,683.0 1313.5,683.0 L1376.2,683.0 Z" fill="rgba(255,99,132,0.5)"/>
<path d="M522.5,683.0 L569.0,683.0 C575.9,683.0 577.8,676.0 581.5,676.0 C585.2,676.0 587.1,683.0 594.0,683.0 L715.3,683.0 C723.3,683.0 725.4,679.7 729.8,679.7 C734.1,679.7 736.3,683.0 744.3,683.0 L852.5,683.0 C859.1,683.0 860.9,680.0 864.5,680.0 C868.1,680.0 869.9,683.0 876.5,683.0 L1002.5,683.0 C1008.3,683.0 1009.9,676.2 1013.0,676.2 C1016.1,676.2 1017.7,683.0 1023.5,683.0 L1137.0,683.0 C1144.2,683.0 1146.1,680.0 1150.0,680.0 C1153.9,680.0 1155.8,683.0 1163.0,683.0 L1287.5,683.0 C1294.7,683.0 1296.6,679.7 1300.5,679.7 C1304.4,679.7 1306.3,683.0 1313.5,683.0 L1376.2,683.0" stroke="#ff6384" stroke-width="3.4" fill="none" stroke-linejoin="round"/>
</svg>
<!--/CHART-->
<!--/RIGHT-->

<div id="header" class="abs"></div>
<div id="dash" class="abs"></div>
<div id="hstrip" class="abs"></div>
<div id="search" class="abs"></div>
<div class="abs" style="left:393.3px;top:22.6px;font-size:19.5px;letter-spacing:-0.5px;color:#7a7a7a;z-index:8;line-height:24px">Search</div>
<svg class="abs" style="left:1030px;top:18px;z-index:8" width="32" height="32" viewBox="0 0 32 32">
<circle cx="13.2" cy="12.7" r="7.7" stroke="#5c5c5c" stroke-width="2.5" fill="none"/>
<path d="M19,18.6 L27,26.4" stroke="#5c5c5c" stroke-width="3.1"/>
</svg>

<svg class="abs" style="left:1298px;top:4px;z-index:8" width="64" height="70" viewBox="1298 4 64 70">
<defs><clipPath id="avc"><circle cx="1328.2" cy="34.4" r="27.8"/></clipPath></defs>
<circle cx="1328.2" cy="34.4" r="27.8" fill="#d7d7d7"/>
<g clip-path="url(#avc)">
<path d="M1304,49.3 L1311.2,40.7 L1321.3,34 L1328.2,36 L1335.1,34 L1345.2,40.7 L1352.4,49.3 L1347,56 L1342,62 L1314.4,62 L1309.4,56 Z" fill="#e3215f"/>
<path d="M1319.8,34.8 L1336.6,34.8 L1338.5,42 L1336,48 L1328.3,57.8 L1320.5,48 L1318,42 Z" fill="#3a3a3a"/>
<path d="M1321.5,34.5 L1317.5,44 L1319.5,52 L1328.3,58.5" stroke="#f0f0f0" stroke-width="1.3" fill="none"/>
<path d="M1335,34.5 L1339,44 L1337,52 L1328.3,58.5" stroke="#f0f0f0" stroke-width="1.3" fill="none"/>
<path d="M1313.5,45 Q1316,42.5 1319.5,44 L1322,50 Q1321,55 1317.5,55.5 Q1313.5,54 1313.3,49 Z" fill="#d9d9d9"/>
<path d="M1343,45 Q1340.5,42.5 1337,44 L1334.5,50 Q1335.5,55 1339,55.5 Q1343,54 1343.2,49 Z" fill="#d9d9d9"/>
<path d="M1304.7,33.8 L1313,33.5 L1318,38.5" stroke="#2a2a2a" stroke-width="1.6" fill="none" stroke-linejoin="round"/>
<path d="M1337.5,34.8 L1343.3,38.3 L1353.7,36.1" stroke="#2a2a2a" stroke-width="1.6" fill="none" stroke-linejoin="round"/>
<rect x="1325.5" y="31" width="5.5" height="4" fill="#9a9a9a"/>
<path d="M1321,19 L1335.5,19 L1335.5,27 Q1333,32 1328.2,32 Q1323.5,32 1321,27 Z" fill="#e6e6e6"/>
<path d="M1321,25.5 Q1322,32 1328.2,32.2 Q1334.5,32 1335.5,25.5 L1335.5,28.5 Q1333.5,33.8 1328.2,33.8 Q1323,33.8 1321,28.5 Z M1324,26.5 Q1328.2,24.5 1332.5,26.5 L1332.5,28 Q1328.2,27 1324,28 Z" fill="#333"/>
<path d="M1321,27 Q1321.5,33 1328.2,33.5 Q1335,33 1335.5,27 Q1333,30 1328.2,29.5 Q1323.5,30 1321,27 Z" fill="#333"/>
<path d="M1319.8,21.5 Q1319,12 1327,11 Q1331,10 1334,11.5 Q1338,13 1337.3,19 L1336,23 Q1333,16.5 1326,17 Q1322,18 1321.2,23 Z" fill="#333"/>
<path d="M1321.5,22.8 H1327.3 V25.2 Q1324.5,26.5 1321.5,25.2 Z M1329.1,22.8 H1334.9 V25.2 Q1332,26.5 1329.1,25.2 Z" fill="none" stroke="#444" stroke-width="0.8"/>
<path d="M1326.3,44 Q1328.2,41.5 1330.1,44 L1330.4,48.5 L1326,48.5 Z" fill="#e6e6e6"/>
<path d="M1323.5,41.5 Q1322.5,45 1323.5,49 M1333,41.5 Q1334,45 1333,49" stroke="#cfcfcf" stroke-width="0.9" fill="none"/>
</g>
</svg>
<svg class="abs" style="left:1340px;top:68px;z-index:8" width="24" height="8" viewBox="1340 68 24 8"><path d="M1345.5,73.5 Q1348,70 1351.5,73.5 Z" fill="#e8402a"/><path d="M1354.5,73.5 Q1357,70.5 1360,73.5 Z" fill="#f0a080"/></svg>
</body></html>
